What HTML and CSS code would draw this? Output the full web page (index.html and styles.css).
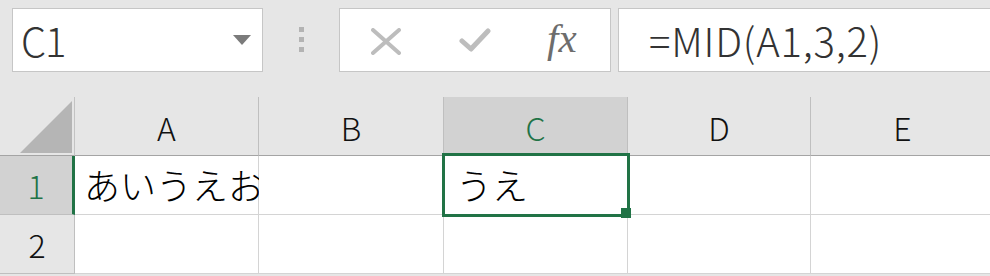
FILE: index.html
```html
<!DOCTYPE html>
<html lang="ja">
<head>
<meta charset="utf-8">
<link rel="stylesheet" href="styles.css">
</head>
<body>
<div class="formula-bar">
  <div class="namebox">
    <span class="name">C1</span>
    <svg class="arrow" width="18" height="10" viewBox="0 0 18 10"><polygon points="0,0 18,0 9,10" fill="#7b7b7b"/></svg>
  </div>
  <div class="grip"><i></i><i></i><i></i></div>
  <div class="fbuttons">
    <svg class="btn-x" width="30" height="27" viewBox="0 0 30 27"><path d="M2 2 L28 25 M28 2 L2 25" stroke="#bdbdbd" stroke-width="4" stroke-linecap="round" fill="none"/></svg>
    <svg class="btn-ok" width="32" height="26" viewBox="0 0 32 26"><path d="M3 14 L12 22 L29 4" stroke="#bdbdbd" stroke-width="5" stroke-linecap="round" stroke-linejoin="round" fill="none"/></svg>
    <span class="fx">fx</span>
  </div>
  <div class="fbox">=MID(A1,3,2)</div>
</div>
<div class="sheet">
  <div class="corner"><svg width="52" height="52" viewBox="0 0 52 52"><polygon points="52,0 52,52 0,52" fill="#b5b5b5"/></svg></div>
  <div class="colhead">A</div>
  <div class="colhead">B</div>
  <div class="colhead active">C</div>
  <div class="colhead">D</div>
  <div class="colhead">E</div>

  <div class="rowhead active">1</div>
  <div class="cell">あいうえお</div>
  <div class="cell"></div>
  <div class="cell selected">うえ<span class="handle"></span></div>
  <div class="cell"></div>
  <div class="cell"></div>

  <div class="rowhead">2</div>
  <div class="cell"></div>
  <div class="cell"></div>
  <div class="cell"></div>
  <div class="cell"></div>
  <div class="cell"></div>
</div>
</body>
</html>
```

FILE: styles.css
```css
html, body {
  margin: 0;
  padding: 0;
  background: #e6e6e6;
  overflow: hidden;
}
body {
  width: 990px;
  height: 276px;
  font-family: "Noto Sans CJK JP", "Noto Sans", sans-serif;
  font-weight: 300;
  color: #000;
}
.formula-bar {
  display: flex;
  align-items: stretch;
  height: 64px;
  padding: 8px 0 0 12px;
}
.namebox {
  box-sizing: border-box;
  width: 251px;
  background: #fff;
  border: 1px solid #c6c6c6;
  display: flex;
  align-items: center;
  justify-content: space-between;
  padding: 0 11px 0 8px;
}
.name {
  font-size: 40px;
  color: #333;
  line-height: 1;
  letter-spacing: -1px;
}
.arrow { display: block; }
.grip {
  width: 76px;
  display: flex;
  flex-direction: column;
  align-items: center;
  justify-content: flex-start;
  gap: 5px;
  padding-top: 19px;
  box-sizing: border-box;
}
.grip i {
  display: block;
  width: 5px;
  height: 5px;
  background: #b3b3b3;
}
.fbuttons {
  box-sizing: border-box;
  width: 272px;
  background: #fff;
  border: 1px solid #c6c6c6;
  display: flex;
  align-items: center;
  padding-left: 31px;
}
.btn-x { display: block; margin-top: 2px; }
.btn-ok { display: block; margin-left: 58px; }
.fx {
  font-family: "Liberation Serif", serif;
  font-style: italic;
  font-weight: 400;
  font-size: 41px;
  color: #6d6d6d;
  margin-left: 56px;
  margin-top: -3px;
  line-height: 1;
}
.fbox {
  box-sizing: border-box;
  flex: 1;
  margin-left: 7px;
  margin-right: -10px;
  background: #fff;
  border: 1px solid #c6c6c6;
  display: flex;
  align-items: center;
  padding-left: 30px;
  font-size: 40px;
  letter-spacing: 0.8px;
  color: #333;
  line-height: 1;
}
.sheet {
  margin-top: 25px;
  display: grid;
  grid-template-columns: 75px 184px 185px 184px 183px 184px;
  grid-template-rows: 59px 59px 59px;
}
.corner, .colhead, .rowhead, .cell {
  box-sizing: border-box;
}
.corner {
  background: #e6e6e6;
  border-right: 1px solid #c3c3c3;
  border-bottom: 1px solid #a4a4a4;
  display: flex;
  align-items: flex-end;
  justify-content: flex-end;
  padding: 0 2px 2px 0;
}
.corner svg { display: block; }
.colhead {
  background: #e6e6e6;
  border-right: 1px solid #bfbfbf;
  border-bottom: 1px solid #a4a4a4;
  display: flex;
  align-items: center;
  justify-content: center;
  font-size: 32px;
  color: #111;
  padding-top: 1px;
}
.colhead.active {
  background: #d2d2d2;
  color: #217346;
}
.rowhead {
  background: #e6e6e6;
  border-right: 1px solid #bfbfbf;
  border-bottom: 1px solid #bfbfbf;
  display: flex;
  align-items: center;
  justify-content: center;
  font-size: 32px;
  color: #111;
}
.rowhead.active {
  background: #d2d2d2;
  color: #217346;
  border-right: 3px solid #217346;
}
.cell {
  background: #fff;
  border-right: 1px solid #d4d4d4;
  border-bottom: 1px solid #d4d4d4;
  display: flex;
  align-items: center;
  padding: 0 0 3px 9px;
  font-size: 36px;
  white-space: nowrap;
  color: #000;
}
.cell.selected {
  position: relative;
  padding-left: 12px;
}
.cell.selected::after {
  content: "";
  position: absolute;
  top: -3px;
  left: -2px;
  right: -3px;
  bottom: -3px;
  border: 3px solid #217346;
  pointer-events: none;
}
.handle {
  position: absolute;
  right: -4px;
  bottom: -4px;
  width: 10px;
  height: 10px;
  background: #217346;
  z-index: 2;
}
```
